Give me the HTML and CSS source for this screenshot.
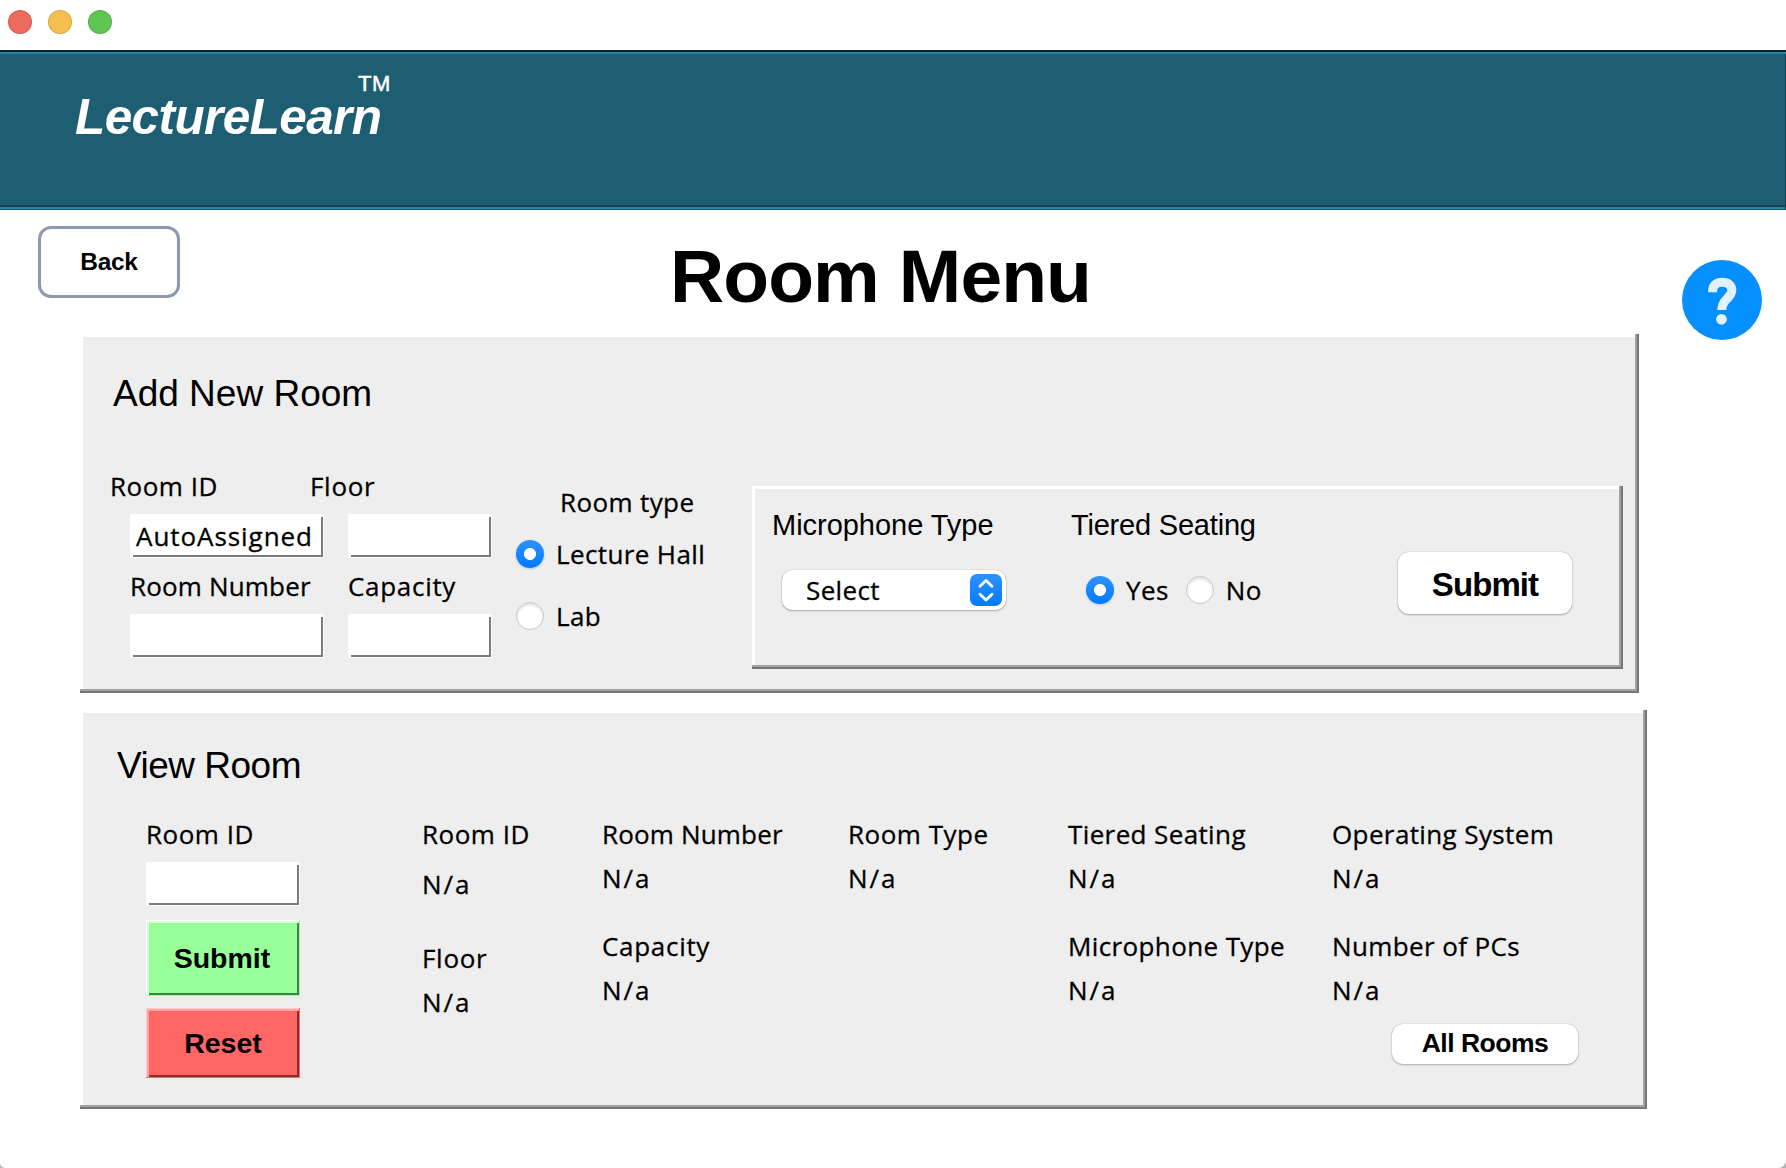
FILE: index.html
```html
<!DOCTYPE html>
<html lang="en">
<head>
<meta charset="utf-8">
<title>LectureLearn - Room Menu</title>
<link rel="stylesheet" href="styles.css">
</head>
<body>
<div class="window">
  <div class="titlebar">
    <span class="light light-close"></span>
    <span class="light light-min"></span>
    <span class="light light-zoom"></span>
  </div>

  <header class="banner">
    <span class="logo">LectureLearn</span><span class="tm">TM</span>
  </header>

  <div class="toolbar">
    <button class="back">Back</button>
    <h1 class="page-title">Room Menu</h1>
    <svg class="help" viewBox="0 0 80 80" width="80" height="80" aria-label="Help">
      <circle cx="40" cy="40" r="40" fill="#058fff"/>
      <path d="M30.5 32.2C30.5 25.5 33.8 22.2 40.2 22.2C46.3 22.2 49.8 25.3 49.8 30.2C49.8 38.4 39.8 38.6 39.8 50" fill="none" stroke="#e2f1ff" stroke-width="9"/>
      <circle cx="39.5" cy="59.3" r="5.4" fill="#e2f1ff"/>
    </svg>
  </div>

  <section class="panel add-panel">
    <h2 class="panel-title">Add New Room</h2>
    <div class="add-row">
      <div class="stack col-a">
        <label class="label label-id ls-5">Room ID</label>
        <div class="field ls-8">AutoAssigned</div>
        <label class="label ls-2">Room Number</label>
        <div class="field"></div>
      </div>
      <div class="stack col-b">
        <label class="label label-floor ls-6">Floor</label>
        <div class="field"></div>
        <label class="label ls-6">Capacity</label>
        <div class="field"></div>
      </div>
      <div class="col-type">
        <div class="label type-label">Room type</div>
        <div class="option"><span class="radio on"></span><span>Lecture Hall</span></div>
        <div class="option"><span class="radio"></span><span>Lab</span></div>
      </div>
      <div class="panel sub-panel">
        <div class="sub-col sub-mic">
          <div class="sub-label">Microphone Type</div>
          <div class="select"><span>Select</span>
            <svg class="stepper" viewBox="0 0 32 32" width="32" height="32">
              <defs><linearGradient id="blue" x1="0" y1="0" x2="0" y2="1"><stop offset="0" stop-color="#2f93ff"/><stop offset="1" stop-color="#017aff"/></linearGradient></defs>
              <rect width="32" height="32" rx="7" fill="url(#blue)"/>
              <path d="M10 12.3L16 6.5L22 12.3M10 20.2L16 26L22 20.2" fill="none" stroke="#fff" stroke-width="2.8" stroke-linecap="round" stroke-linejoin="round"/>
            </svg>
          </div>
        </div>
        <div class="sub-col sub-tier">
          <div class="sub-label tier-label">Tiered Seating</div>
          <div class="options">
            <div class="option"><span class="radio on"></span><span>Yes</span></div>
            <div class="option"><span class="radio"></span><span>No</span></div>
          </div>
        </div>
        <button class="aqua submit-big">Submit</button>
      </div>
    </div>
  </section>

  <section class="panel view-panel">
    <h2 class="panel-title">View Room</h2>
    <div class="view-row">
      <div class="stack search">
        <label class="label ls-5">Room ID</label>
        <div class="field"></div>
        <button class="bevel green">Submit</button>
        <button class="bevel red">Reset</button>
      </div>
      <div class="info info-id">
        <div class="label ls-5">Room ID</div><div class="label value">N/a</div>
        <div class="label next ls-6">Floor</div><div class="label value">N/a</div>
      </div>
      <div class="info info-number">
        <div class="label ls-2">Room Number</div><div class="label value">N/a</div>
        <div class="label next ls-6">Capacity</div><div class="label value">N/a</div>
      </div>
      <div class="info info-type">
        <div class="label ls-5">Room Type</div><div class="label value">N/a</div>
      </div>
      <div class="info info-tier">
        <div class="label">Tiered Seating</div><div class="label value">N/a</div>
        <div class="label next">Microphone Type</div><div class="label value">N/a</div>
      </div>
      <div class="info info-os">
        <div class="label">Operating System</div><div class="label value">N/a</div>
        <div class="label next">Number of PCs</div><div class="label value">N/a</div>
        <button class="aqua all-rooms">All Rooms</button>
      </div>
    </div>
  </section>
</div>
</body>
</html>
```
FILE: styles.css
```css
* { box-sizing: border-box; }

body {
  margin: 0;
  background: #b4b4b4;
  color: #000;
  font-family: "Open Sans", sans-serif;
  font-size: 26px;
  line-height: 32px;
}

h1, h2 { margin: 0; }

button {
  padding: 0;
  border: 0;
  color: #000;
  font-family: "Liberation Sans", Arial, sans-serif;
  font-weight: 700;
}

.window {
  width: 1786px;
  height: 1168px;
  overflow: hidden;
  background: #fff;
  border-radius: 0 0 8px 5px;
}

/* Window chrome */
.titlebar {
  display: flex;
  gap: 16px;
  height: 50px;
  padding: 10px 8px;
}

.light {
  width: 24px;
  height: 24px;
  border: 1px solid rgba(0, 0, 0, 0.12);
  border-radius: 50%;
}

.light-close { background: #ec6a5e; }
.light-min { background: #f5bf4f; }
.light-zoom { background: #61c554; }

/* Brand banner */
.banner {
  display: flex;
  align-items: flex-start;
  height: 160px;
  padding-left: 75px;
  background: #1e5e72;
  color: #fff;
  font-family: "Liberation Sans", Arial, sans-serif;
  box-shadow: inset 0 2px #04202c, inset 0 4px #2585a6, inset -1px 0 #173f4d,
    inset 0 -1px #1e5e72, inset 0 -3px #2585a6, inset 0 -5px #173f4d;
}

.logo {
  width: 283px;
  margin-top: 48px;
  font-size: 49.5px;
  font-style: italic;
  font-weight: 700;
  letter-spacing: -0.6px;
  line-height: 38px;
  white-space: nowrap;
}

.tm {
  margin-top: 24px;
  font-size: 22px;
  line-height: 20px;
  letter-spacing: 0.6px;
  -webkit-text-stroke: 0.5px;
}

/* Page heading row */
.toolbar {
  display: flex;
  align-items: flex-start;
  height: 124px;
}

.back {
  width: 142px;
  height: 72px;
  margin: 16px 0 0 38px;
  padding-bottom: 1px;
  background: #fff;
  border: 3px solid #8a9bb0;
  border-radius: 13px;
  font-size: 24.5px;
  letter-spacing: -0.3px;
}

.page-title {
  width: 1012px;
  margin: 26px 0 0 490px;
  font: 700 75px/80px "Liberation Sans", Arial, sans-serif;
  letter-spacing: -0.9px;
}

.help { margin-top: 50px; }

/* Raised panels */
.panel {
  background: #eee;
  box-shadow: inset -2px -2px #757575, inset -4px -4px #a3a3a3, inset 3px 3px #fff;
}

.panel-title {
  font: 400 37px/40px "Liberation Sans", Arial, sans-serif;
}

.add-panel {
  width: 1559px;
  height: 359px;
  margin-left: 80px;
  padding: 40px 0 0 3px;
}

.add-panel .panel-title {
  margin-left: 30px;
  letter-spacing: 0;
}

.add-row {
  display: flex;
  margin: 56px 0 0 47px;
}

.stack {
  display: flex;
  flex-direction: column;
  gap: 12px;
}

.col-a { width: 194px; margin-right: 24px; }
.col-b { width: 144px; margin-right: 24px; }

.label, .option, .field, .select {
  letter-spacing: 0.38px;
  -webkit-text-stroke: 0.3px;
  white-space: nowrap;
}

.label-id { margin-left: -20px; }
.label-floor { margin-left: -38px; }
.label.ls-2 { letter-spacing: 0.17px; }
.label.ls-5 { letter-spacing: 0.5px; }
.label.ls-6 { letter-spacing: 0.7px; }
.field.ls-8 { letter-spacing: 0.94px; }

.field {
  height: 44px;
  padding: 6px 0 0 6px;
  background:
    linear-gradient(#7b7b7b, #7b7b7b) right 1px bottom 1px / 2px calc(100% - 4px) no-repeat,
    linear-gradient(#7b7b7b, #7b7b7b) right 1px bottom 1px / calc(100% - 4px) 2px no-repeat,
    #fff;
}

.col-type {
  width: 236px;
  padding-top: 16px;
}

.type-label { margin: 0 0 20px 44px; }

.option {
  display: flex;
  align-items: center;
  gap: 12px;
  height: 32px;
}

.col-type .option { margin-bottom: 30px; }

.radio {
  width: 28px;
  height: 28px;
  background: #fff;
  border: 1px solid #c8c8c8;
  border-radius: 50%;
  box-shadow: inset 0 2px 3px rgba(0, 0, 0, 0.12);
}

.radio.on {
  background: radial-gradient(circle, #fff 5.6px, transparent 6.4px), linear-gradient(#2f93ff, #017aff);
  border: 0;
  box-shadow: 0 1px 2px rgba(0, 110, 255, 0.3);
}

.sub-panel {
  display: flex;
  width: 871px;
  height: 183px;
  margin-top: 16px;
  padding: 3px 0 0 3px;
}

.sub-label {
  font: 29px/32px "Liberation Sans", Arial, sans-serif;
  letter-spacing: -0.03px;
  white-space: nowrap;
}

.tier-label {
  margin-left: 1px;
  letter-spacing: -0.2px;
}

.sub-col { padding-top: 20px; }
.sub-mic { width: 315px; padding-left: 17px; }
.sub-tier { width: 328px; }

.select {
  display: flex;
  justify-content: space-between;
  width: 224px;
  height: 40px;
  margin: 29px 0 0 10px;
  padding: 4px 4px 4px 24px;
  background: #fff;
  border-radius: 10px;
  box-shadow: 0 0 1px rgba(0, 0, 0, 0.4), 0 1px 2px rgba(0, 0, 0, 0.25);
}

.options {
  display: flex;
  gap: 17px;
  margin: 33px 0 0 16px;
}

.aqua {
  background: #fff;
  border-radius: 11px;
  box-shadow: 0 0 1px rgba(0, 0, 0, 0.4), 0 1px 2px rgba(0, 0, 0, 0.25);
}

.submit-big {
  width: 174px;
  height: 62px;
  margin-top: 63px;
  padding-top: 4px;
  font-size: 33px;
  letter-spacing: -0.9px;
}

/* Room lookup */
.view-panel {
  width: 1567px;
  height: 399px;
  margin: 17px 0 0 80px;
  padding: 36px 0 0 3px;
}

.view-panel .panel-title {
  margin-left: 34px;
  letter-spacing: -0.5px;
}

.view-row {
  display: flex;
  margin: 32px 0 0 63px;
}

.search { width: 154px; }

.bevel {
  padding: 1px 2px 0 0;
  font-size: 28.5px;
  letter-spacing: 0;
}

.green {
  height: 76px;
  margin-top: 2px;
  background: #99ff99;
  box-shadow: inset -1px -1px #99ff99, inset 1px 1px #fff, inset 3px 3px #d6ffd6, inset -3px -3px #4a7d4a;
}

.red {
  height: 70px;
  padding: 0;
  background: #ff6666;
  box-shadow: inset -1px -1px #ff6666, inset 1px 1px #ffcccc, inset 3px 3px #ffa3a3, inset -3px -3px #7d3232;
}

.label.value {
  margin-top: 12px;
  letter-spacing: 2px;
}

.next { margin-top: 36px; }
.info-id { width: 180px; margin-left: 122px; }
.info-id .label:nth-child(2) { margin-top: 18px; }
.info-id .next { margin-top: 42px; }
.info-number { width: 246px; }
.info-type { width: 220px; }
.info-tier { width: 264px; }

.all-rooms {
  width: 186px;
  height: 40px;
  margin: 18px 0 0 60px;
  padding-bottom: 2px;
  font-size: 26.5px;
  letter-spacing: -0.5px;
}
```
